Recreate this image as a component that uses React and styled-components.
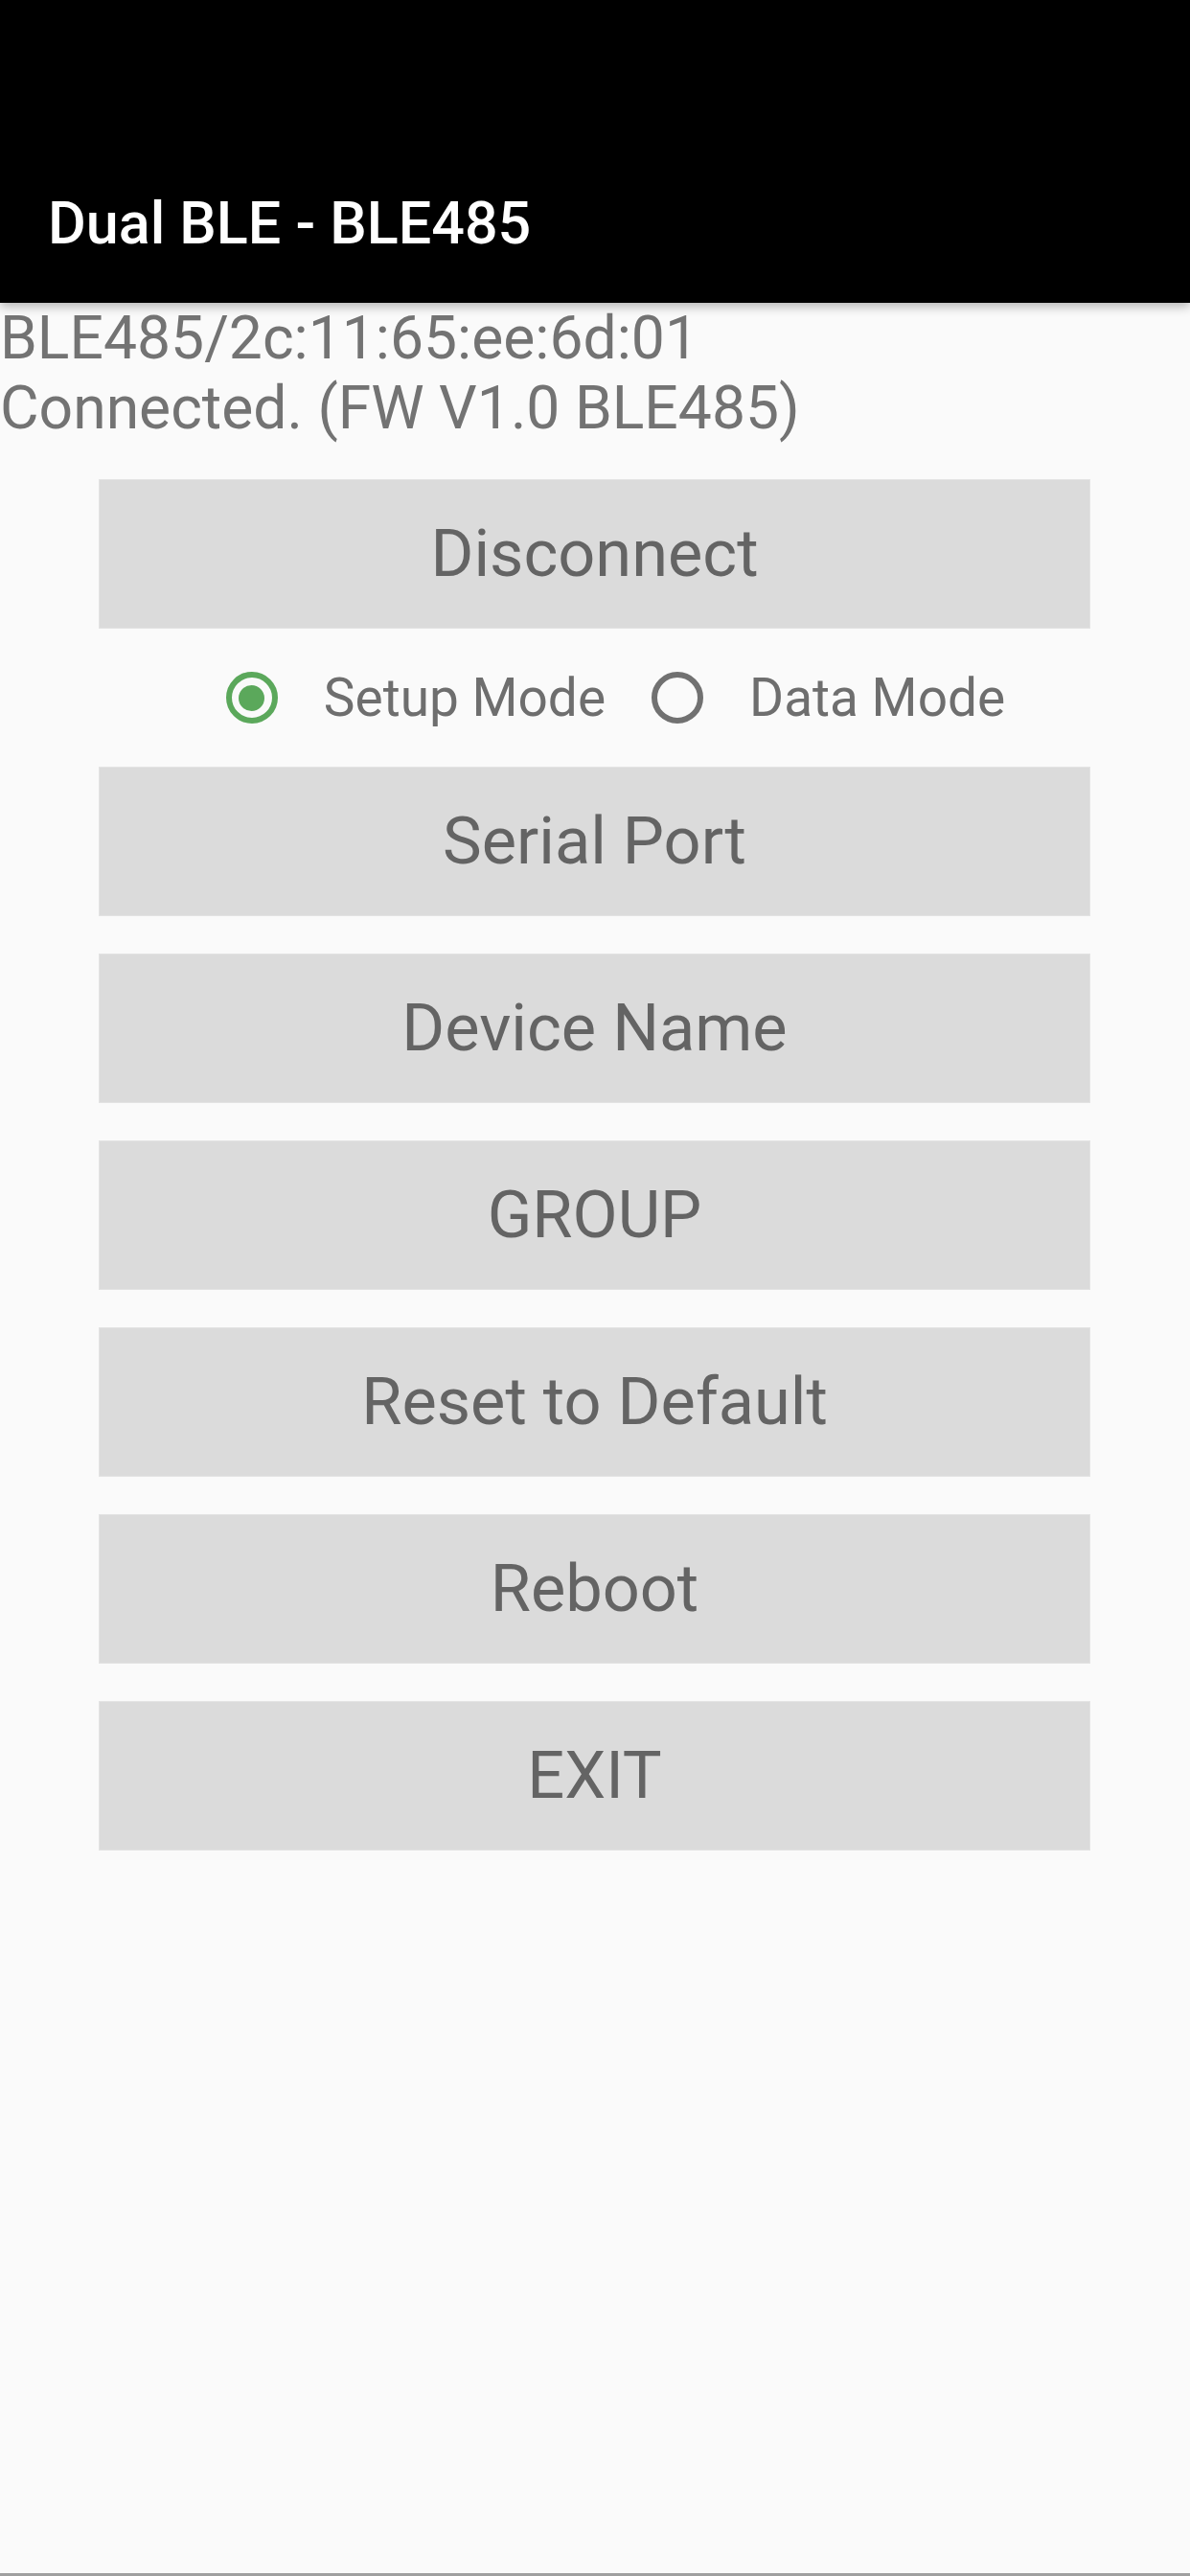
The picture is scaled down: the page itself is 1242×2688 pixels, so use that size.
import React, { useState } from "react";
import styled, { createGlobalStyle } from "styled-components";

const buttons = ["Serial Port", "Device Name", "GROUP", "Reset to Default", "Reboot", "EXIT"];

export default () => {
    const [mode, setMode] = useState("setup");

    return (
        <Screen>
            <GlobalStyle />
            <AppBar>
                <Title>Dual BLE - BLE485</Title>
            </AppBar>
            <Status>
                <div>BLE485/2c:11:65:ee:6d:01</div>
                <div>Connected. (FW V1.0 BLE485)</div>
            </Status>
            <Actions>
                <ActionButton>Disconnect</ActionButton>
                <RadioRow>
                    <RadioItem onClick={() => setMode("setup")}>
                        <RadioCircle checked={mode === "setup"} />
                        <span>Setup Mode</span>
                    </RadioItem>
                    <RadioItem onClick={() => setMode("data")}>
                        <RadioCircle checked={mode === "data"} />
                        <span>Data Mode</span>
                    </RadioItem>
                </RadioRow>
                <ButtonList>
                    {buttons.map((label, index) => {
                        return <ActionButton key={index}>{label}</ActionButton>;
                    })}
                </ButtonList>
            </Actions>
        </Screen>
    );
}

const GlobalStyle = createGlobalStyle`
html, body {
    margin: 0;
    padding: 0;
    background: #fafafa;
}
* {
    box-sizing: border-box;
}
`

const Screen = styled.div`
width: 1242px;
height: 2688px;
background: #fafafa;
font-family: Roboto, "Liberation Sans", sans-serif;
border-bottom: 3px solid #a0a0a0;
`

const AppBar = styled.div`
position: relative;
z-index: 1;
height: 316px;
background: #000;
display: flex;
align-items: flex-end;
padding: 0 50px 52px;
box-shadow: 0 4px 10px rgba(0, 0, 0, 0.28);
`

const Title = styled.div`
color: #fff;
font-size: 61px;
font-weight: 500;
line-height: 61px;
`

const Status = styled.div`
color: #737373;
font-size: 62.4px;
line-height: 73px;
`

const Actions = styled.div`
padding: 38px 104px 0 103px;
`

const ButtonList = styled.div`
display: flex;
flex-direction: column;
gap: 39px;
`

const ActionButton = styled.div`
height: 156px;
background: #dbdbdb;
border: 1px solid #e3e3e3;
display: flex;
align-items: center;
justify-content: center;
color: #646464;
font-size: 68.5px;
line-height: 1;
padding-top: 1px;
`

const RadioRow = styled.div`
height: 144px;
display: flex;
align-items: center;
justify-content: center;
padding-left: 44px;
gap: 48px;
`

const RadioItem = styled.div`
display: flex;
align-items: center;
gap: 48px;
color: #6e6e6e;
font-size: 55px;
cursor: pointer;
`

const RadioCircle = styled.div`
width: 54px;
height: 54px;
border-radius: 50%;
border: 6px solid ${props => props.checked ? "#5ba85b" : "#717171"};
display: flex;
align-items: center;
justify-content: center;
&::after {
    content: "";
    width: 27px;
    height: 27px;
    border-radius: 50%;
    background: #5ba85b;
    display: ${props => props.checked ? "block" : "none"};
}
`
